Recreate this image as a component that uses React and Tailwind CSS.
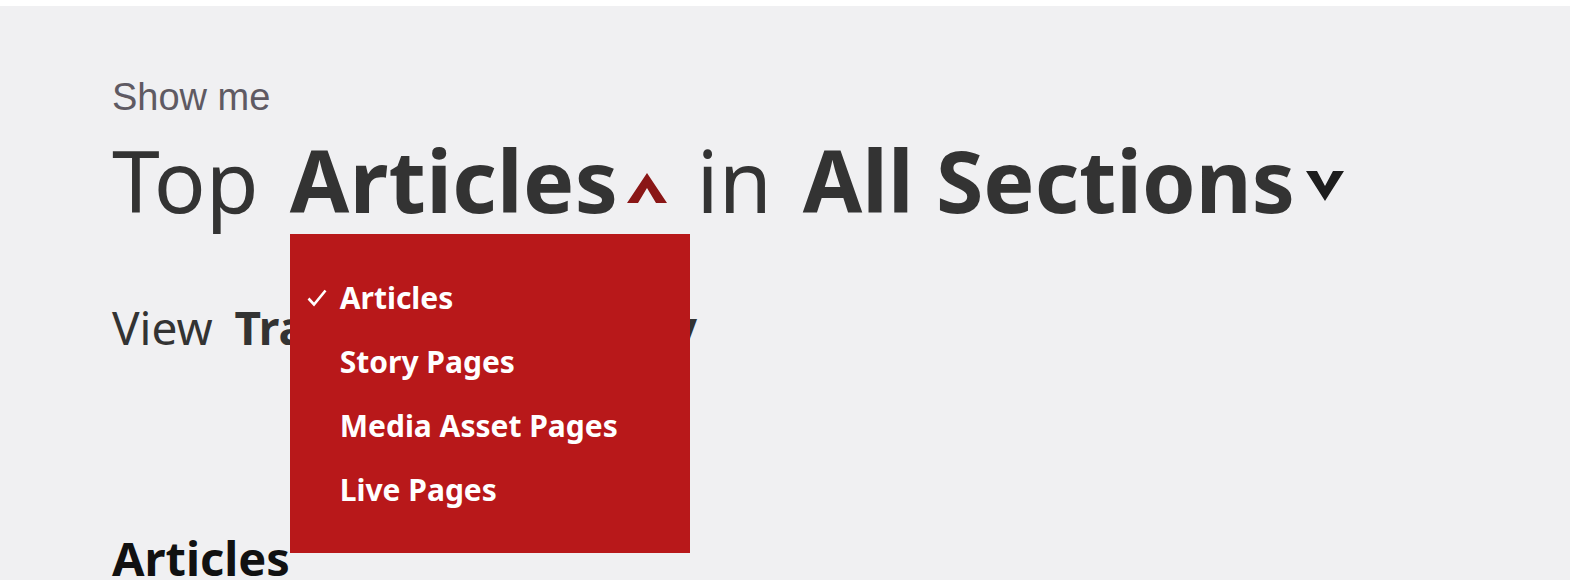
const sans = "font-['Noto_Sans','Open_Sans',sans-serif]";

const options = ["Articles", "Story Pages", "Media Asset Pages", "Live Pages"];

function ChevronUp() {
  return (
    <svg width="40" height="30" viewBox="0 0 40 30" className="fill-[#8a1616]">
      <polygon points="0,30 20,0 40,30 29,30 20,15 11,30" />
    </svg>
  );
}

function ChevronDown() {
  return (
    <svg width="38" height="30" viewBox="0 0 38 30" className="fill-[#1e1e1e]">
      <polygon points="0,0 11,0 19,15 27,0 38,0 19,30" />
    </svg>
  );
}

function Check() {
  return (
    <svg width="20" height="18" viewBox="0 0 20 18" fill="none" stroke="white" strokeWidth="2.6">
      <path d="M1.5 9.5 L7 15.5 L18.5 1.5" />
    </svg>
  );
}

export default function App() {
  return (
    <div className={`min-h-screen bg-white pt-[6px] ${sans}`}>
      <main className="h-[574px] overflow-hidden bg-[#f0f0f2] pl-[112px]">
        <p className="pt-[72px] font-['Liberation_Sans',Arial,sans-serif] text-[38px] leading-none text-[#5f5a63]">
          Show me
        </p>

        <h1 className="mt-[21px] flex h-[86px] items-start text-[86px] leading-none text-[#333]">
          <span className="font-normal">Top</span>
          <span className="relative ml-[31px] flex items-start">
            <span className="font-bold tracking-[0.4px]">Articles</span>
            <span className="ml-[9px] mt-[36px]">
              <ChevronUp />
            </span>
            <div className="absolute left-0 top-[97px] z-10 h-[319px] w-[400px] bg-[#b8181a] pt-[32px]">
              <ul>
                {options.map((o, i) => (
                  <li key={o} className="flex h-[64px] items-center text-[30px] font-bold leading-[64px] text-white">
                    <span className="flex w-[50px] justify-end pr-[13px]">{i === 0 && <Check />}</span>
                    {o}
                  </li>
                ))}
              </ul>
            </div>
          </span>
          <span className="ml-[29px] font-normal">in</span>
          <span className="ml-[31px] flex items-start">
            <span className="font-bold">All Sections</span>
            <span className="ml-[11px] mt-[34px]">
              <ChevronDown />
            </span>
          </span>
        </h1>

        <p className="mt-[81px] text-[46px] leading-none text-[#333]">
          View <span className="ml-[10px] font-bold">Traffic for Yesterday</span>
        </p>

        <h2 className="mt-[185px] text-[47px] font-bold leading-none text-[#111]">Articles</h2>
      </main>
    </div>
  );
}
